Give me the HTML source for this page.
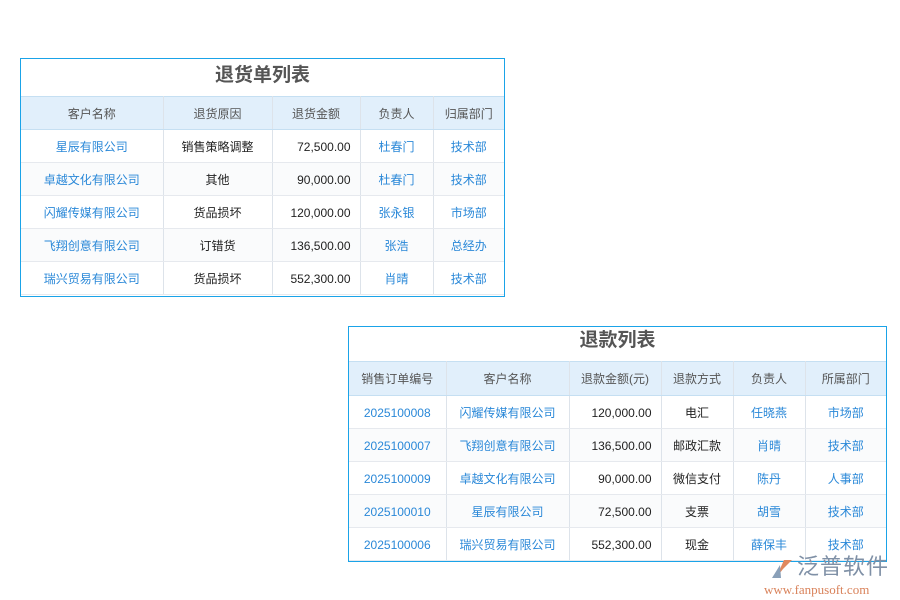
<!DOCTYPE html>
<html><head><meta charset="utf-8"><style>
body{margin:0;width:900px;height:600px;background:#fff;position:relative;font-family:"Liberation Sans","Noto Sans CJK SC",sans-serif;overflow:hidden}
.t{position:absolute;border:1px solid #1aa3e8;box-sizing:border-box;background:#fff}
.ti{text-align:center;font-weight:bold;color:#555;font-size:19px}
table{border-collapse:collapse;table-layout:fixed;width:100%}
td,th{font-size:12px;text-align:center;border-right:1px solid #dde3ea;border-bottom:1px solid #e6e9ee;padding:0;white-space:nowrap;vertical-align:middle}
td:last-child,th:last-child{border-right:none}
th{background:#e1effb;color:#555;font-weight:normal;border-top:1px solid #c5dff2;border-bottom:1px solid #c5dff2}
tr:nth-child(odd) td{background:#fafbfc}
.b{color:#2a88d8}.k{color:#222}.r{text-align:right;padding-right:9px;color:#222;padding-top:1px}
.n{padding-top:1px}
</style></head><body>
<div class="t" style="left:20px;top:58px;width:485px;height:239px">
<div class="ti" style="height:37px;line-height:33px">退货单列表</div>
<table><colgroup><col style="width:142px"><col style="width:109px"><col style="width:88px"><col style="width:73px"><col></colgroup>
<tr style="height:33px"><th>客户名称</th><th>退货原因</th><th>退货金额</th><th>负责人</th><th>归属部门</th></tr>
<tr style="height:33px"><td class="b">星辰有限公司</td><td class="k">销售策略调整</td><td class="r">72,500.00</td><td class="b">杜春门</td><td class="b">技术部</td></tr>
<tr style="height:33px"><td class="b">卓越文化有限公司</td><td class="k">其他</td><td class="r">90,000.00</td><td class="b">杜春门</td><td class="b">技术部</td></tr>
<tr style="height:33px"><td class="b">闪耀传媒有限公司</td><td class="k">货品损坏</td><td class="r">120,000.00</td><td class="b">张永银</td><td class="b">市场部</td></tr>
<tr style="height:33px"><td class="b">飞翔创意有限公司</td><td class="k">订错货</td><td class="r">136,500.00</td><td class="b">张浩</td><td class="b">总经办</td></tr>
<tr style="height:33px"><td class="b">瑞兴贸易有限公司</td><td class="k">货品损坏</td><td class="r">552,300.00</td><td class="b">肖晴</td><td class="b">技术部</td></tr>
</table></div>
<div class="t" style="left:348px;top:326px;width:539px;height:236px">
<div class="ti" style="height:34px;line-height:27px">退款列表</div>
<table><colgroup><col style="width:97px"><col style="width:123px"><col style="width:92px"><col style="width:72px"><col style="width:72px"><col></colgroup>
<tr style="height:34px"><th>销售订单编号</th><th>客户名称</th><th>退款金额(元)</th><th>退款方式</th><th>负责人</th><th>所属部门</th></tr>
<tr style="height:33px"><td class="b n">2025100008</td><td class="b">闪耀传媒有限公司</td><td class="r">120,000.00</td><td class="k">电汇</td><td class="b">任晓燕</td><td class="b">市场部</td></tr>
<tr style="height:33px"><td class="b n">2025100007</td><td class="b">飞翔创意有限公司</td><td class="r">136,500.00</td><td class="k">邮政汇款</td><td class="b">肖晴</td><td class="b">技术部</td></tr>
<tr style="height:33px"><td class="b n">2025100009</td><td class="b">卓越文化有限公司</td><td class="r">90,000.00</td><td class="k">微信支付</td><td class="b">陈丹</td><td class="b">人事部</td></tr>
<tr style="height:33px"><td class="b n">2025100010</td><td class="b">星辰有限公司</td><td class="r">72,500.00</td><td class="k">支票</td><td class="b">胡雪</td><td class="b">技术部</td></tr>
<tr style="height:33px"><td class="b n">2025100006</td><td class="b">瑞兴贸易有限公司</td><td class="r">552,300.00</td><td class="k">现金</td><td class="b">薛保丰</td><td class="b">技术部</td></tr>
</table></div>
<div style="position:absolute;left:770px;top:556px;width:24px;height:24px">
<svg width="24" height="24"><path d="M6 22 L14 4 L22 4 L13 13 Z" fill="#e0895f"/><path d="M2 22 L10 9 L11 22Z" fill="#8aa0b8"/></svg></div>
<div style="position:absolute;left:797px;top:553px;font-size:22px;line-height:28px;color:#7f90a6;letter-spacing:1px">泛普软件</div>
<div style="position:absolute;left:764px;top:583px;font-size:13px;line-height:14px;color:#d9825a;font-family:'Liberation Serif',serif">www.fanpusoft.com</div>
</body></html>
